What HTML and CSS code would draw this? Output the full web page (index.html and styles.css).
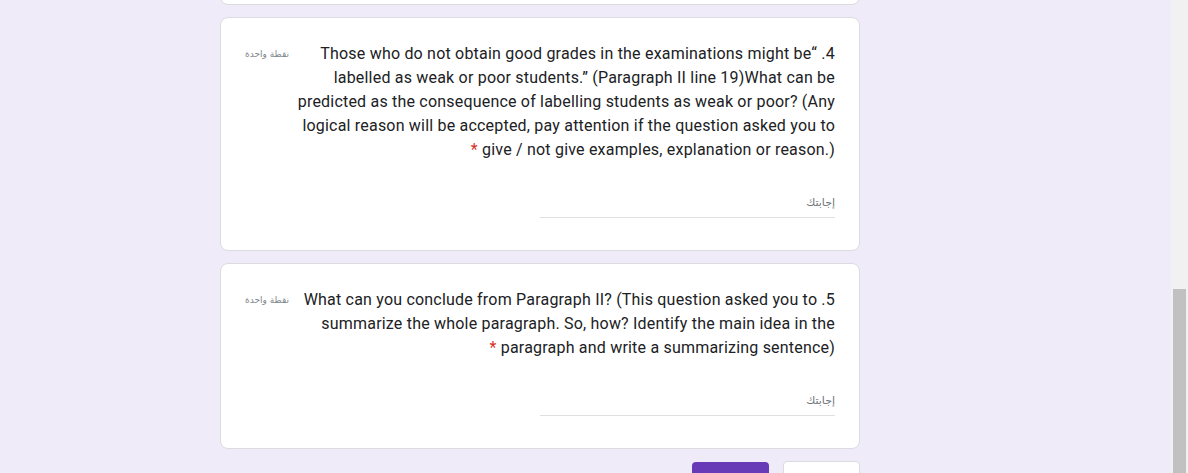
FILE: index.html
```html
<!DOCTYPE html>
<html lang="ar" dir="rtl">
<head>
<meta charset="utf-8">
<title>Form</title>
<link rel="stylesheet" href="styles.css">
</head>
<body>
<div class="shell">
  <main class="viewport">
    <div class="column">
      <div class="card card-prev"></div>

      <section class="card question">
        <div class="q-head">
          <div class="q-title">4. <bdi dir="ltr">Those who do not obtain good grades in the examinations might be“ labelled as weak or poor students.” (Paragraph II line 19)What can be predicted as the consequence of labelling students as weak or poor? (Any logical reason will be accepted, pay attention if the question asked you to give / not give examples, explanation or reason.)</bdi><span class="req"> *</span></div>
          <div class="q-points">نقطة واحدة</div>
        </div>
        <div class="answer"><span class="placeholder">إجابتك</span></div>
      </section>

      <section class="card question">
        <div class="q-head">
          <div class="q-title">5. <bdi dir="ltr">What can you conclude from Paragraph II? (This question asked you to summarize the whole paragraph. So, how? Identify the main idea in the paragraph and write a summarizing sentence)</bdi><span class="req"> *</span></div>
          <div class="q-points">نقطة واحدة</div>
        </div>
        <div class="answer"><span class="placeholder">إجابتك</span></div>
      </section>

      <div class="actions">
        <button class="btn btn-back">رجوع</button>
        <button class="btn btn-submit">إرسال</button>
      </div>
    </div>
  </main>
  <div class="scrollbar"><div class="thumb"></div></div>
</div>
</body>
</html>
```

FILE: styles.css
```css
html, body {
  margin: 0;
  padding: 0;
  height: 100%;
  overflow: hidden;
}

body {
  background: #f0ebf8;
  font-family: Roboto, "DejaVu Sans", sans-serif;
  color: #202124;
}

.shell {
  display: flex;
  direction: ltr;
  height: 473px;
}

.viewport {
  flex: 1;
  overflow: hidden;
}

.column {
  width: 640px;
  margin-left: 220px;
  margin-top: -60px;
  display: flex;
  flex-direction: column;
  gap: 12px;
  direction: rtl;
}

.card {
  background: #fff;
  border: 1px solid #dadce0;
  border-radius: 8px;
  box-sizing: border-box;
}

.card-prev {
  height: 65px;
}

.question {
  padding: 24px 24px 32px;
}

.q-head {
  display: flex;
  align-items: flex-start;
  gap: 4px;
}

.q-title {
  flex: 1;
  font-size: 16px;
  line-height: 24px;
  letter-spacing: 0.2px;
  text-align: right;
}

.req {
  color: #d93025;
}

.q-points {
  width: 44px;
  flex-shrink: 0;
  font-family: "DejaVu Sans", sans-serif;
  font-size: 9px;
  line-height: 24px;
  color: #80868b;
  text-align: right;
  white-space: nowrap;
}

.answer {
  width: 295px;
  margin-top: 29px;
  height: 24px;
  padding-bottom: 2px;
  border-bottom: 1px solid #e0e0e0;
  text-align: right;
}

.placeholder {
  font-family: "DejaVu Sans", sans-serif;
  font-size: 11px;
  line-height: 24px;
  color: #70757a;
}

.actions {
  display: flex;
  gap: 14px;
}

.btn {
  width: 77px;
  height: 36px;
  border-radius: 4px;
  font-family: Roboto, "DejaVu Sans", sans-serif;
  font-size: 14px;
  border: none;
}

.btn-back {
  background: #fff;
  color: #673ab7;
  border: 1px solid #dadce0;
}

.btn-submit {
  background: #673ab7;
  color: #fff;
  margin-top: 1px;
}

.scrollbar {
  width: 17px;
  flex-shrink: 0;
  background: #f1f1f1;
  display: flex;
  flex-direction: column;
  justify-content: flex-end;
  align-items: center;
}

.thumb {
  width: 13px;
  height: 184px;
  background: #c1c1c1;
}
```
